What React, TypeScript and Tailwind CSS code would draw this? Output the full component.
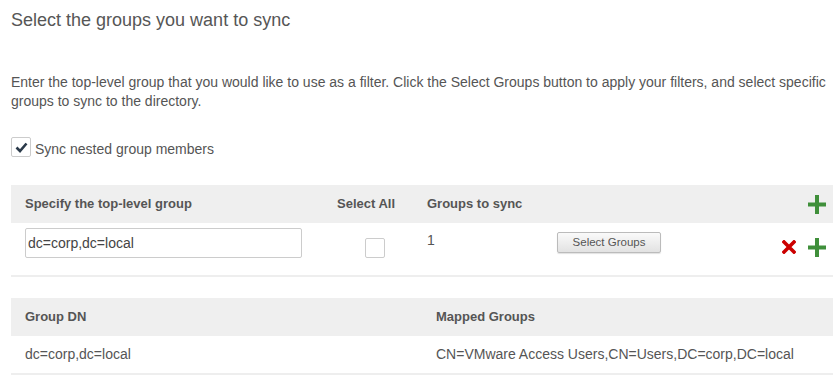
import React from 'react';

const PlusIcon = () => (
  <svg width="18" height="19" viewBox="0 0 18 19" className="block">
    <rect x="7" y="0" width="4" height="19" fill="#3f8f3a" />
    <rect x="0" y="7.5" width="18" height="4" fill="#3f8f3a" />
  </svg>
);

const RemoveIcon = () => (
  <svg width="14" height="14" viewBox="0 0 14 14" className="block">
    <path d="M2 2 L12 12 M12 2 L2 12" stroke="#cc0000" strokeWidth="3.6" strokeLinecap="square" />
  </svg>
);

export default function App() {
  return (
    <div className="min-h-screen bg-white pl-[11px] pr-[7px] text-[#555] font-['Liberation_Sans',Arial,sans-serif]">
      <h1 className="pt-2 text-[18px] leading-[24px] font-normal text-[#565656]">Select the groups you want to sync</h1>

      <p className="mt-[41px] text-[14px] leading-[19px]">
        Enter the top-level group that you would like to use as a filter. Click the Select Groups button to apply your filters, and select specific groups to sync to the directory.
      </p>

      <label className="mt-[26px] flex h-[20px] items-center gap-[4px] text-[14px] leading-[20px]">
        <span className="flex h-[20px] w-[20px] items-center justify-center rounded-[2px] border border-[#cccccc] bg-white">
          <svg width="13" height="11" viewBox="0 0 13 11">
            <path d="M1.5 5.5 L5 9 L11.5 1.5" stroke="#2b3a4a" strokeWidth="2.6" fill="none" />
          </svg>
        </span>
        <span className="translate-y-[2px]">Sync nested group members</span>
      </label>

      {/* filters table */}
      <div className="mt-[28px]">
        <div className="grid h-[38px] grid-cols-[312px_90px_1fr_auto] items-center bg-[#efefef] text-[13px] font-bold">
          <div className="pl-[14px]">Specify the top-level group</div>
          <div className="pl-[14px]">Select All</div>
          <div className="pl-[14px]">Groups to sync</div>
          <div className="pr-[7px]"><PlusIcon /></div>
        </div>
        <div className="grid h-[54px] grid-cols-[312px_90px_1fr_auto] items-start border-b-2 border-[#eeeeee] text-[14px]">
          <div className="pl-[14px] pt-[5px]">
            <input
              defaultValue="dc=corp,dc=local"
              className="h-[30px] w-[277px] rounded-[2px] border border-[#cccccc] px-[2px] text-[14px] text-[#444] outline-none"
            />
          </div>
          <div className="flex justify-center pl-[14px] pt-[15px]">
            <span className="block h-[20px] w-[20px] rounded-[2px] border border-[#cccccc] bg-white" />
          </div>
          <div className="flex items-start pl-[14px]">
            <span className="w-[130px] pt-[7px] leading-[20px]">1</span>
            <button className="mt-[9px] h-[21px] w-[104px] rounded-[2px] border border-[#bbbbbb] bg-gradient-to-b from-[#fafafa] to-[#e2e2e2] text-[11.5px] text-[#555] shadow-[0_1px_1px_rgba(0,0,0,0.12)]">
              Select Groups
            </button>
          </div>
          <div className="flex items-start gap-[12px] pr-[7px] pt-[15px]">
            <span className="pt-[2px]"><RemoveIcon /></span>
            <PlusIcon />
          </div>
        </div>
      </div>

      {/* mapped groups table */}
      <div className="mt-[21px] text-[14px]">
        <div className="grid h-[38px] grid-cols-2 items-center bg-[#efefef] text-[13px] font-bold">
          <div className="pl-[14px]">Group DN</div>
          <div className="pl-[14px]">Mapped Groups</div>
        </div>
        <div className="grid h-[39px] grid-cols-2 items-center border-b-2 border-[#eeeeee]">
          <div className="pl-[14px]">dc=corp,dc=local</div>
          <div className="pl-[14px]">CN=VMware Access Users,CN=Users,DC=corp,DC=local</div>
        </div>
      </div>
    </div>
  );
}
